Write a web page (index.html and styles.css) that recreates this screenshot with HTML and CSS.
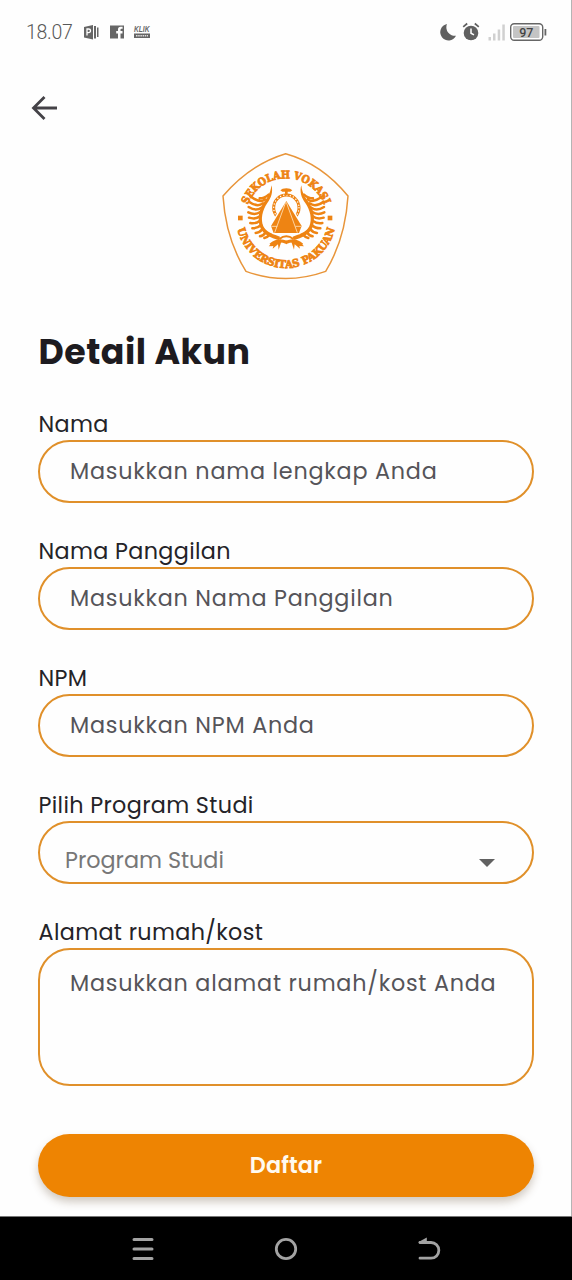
FILE: index.html
```html
<!DOCTYPE html>
<html lang="id">
<head>
<meta charset="utf-8">
<title>Detail Akun</title>
<link rel="stylesheet" href="styles.css">
</head>
<body>
<div class="screen">
  <header class="status">
    <span class="clock">18.07</span>
    <svg class="notif" width="68" height="20" viewBox="0 -2 68 20">
      <g fill="#666">
        <path d="M0 3L9 1V15.500L0 13.500Z"/><path d="M10 2H12V14.500H10ZM13 3.500H14.500V13H13Z"/>
        <path d="M26 1.500H40V14.500H36.500V9.500H38.500V7H36.500V5.500Q36.500 4.700 37.500 4.700H38.600V2.700H36.500Q34 2.700 34 5.300V7H32.200V9.500H34V14.500H26Z"/>
        <path d="M50 9.500H66V14H50Z"/>
      </g>
      <path d="M3 11.500V5H4.500Q6.500 5 6.500 6.800T4.500 8.700H3" fill="none" stroke="#fff" stroke-width="1.300"/>
      <path d="M52 11.800H64" stroke="#ddd" stroke-width="1.400" stroke-dasharray="1.500 .7"/>
      <text class="klik" x="50" y="8" textLength="15.500" lengthAdjust="spacingAndGlyphs">KLIK</text>
    </svg>
    <svg class="system" width="108" height="22" viewBox="0 0 108 22">
      <path d="M7 3A8.300 8.300 0 1 0 16 14.800A8.600 8.600 0 0 1 7 3Z" fill="#606060"/>
      <circle cx="31" cy="12" r="7.300" fill="#606060"/>
      <path d="M31 7.500V12.200L34 13.800" fill="none" stroke="#fff" stroke-width="1.500"/>
      <path d="M23.200 5.800L27.200 2.500M34.800 2.500L38.800 5.800" stroke="#606060" stroke-width="1.700"/>
      <g fill="#d0d0d0"><rect x="48.500" y="16" width="2.500" height="3.500"/><rect x="53" y="12.500" width="2.500" height="7"/><rect x="57.700" y="8.500" width="2.500" height="11"/><rect x="62.300" y="3.500" width="2.500" height="16"/></g>
      <rect x="70.700" y="2.700" width="32" height="16.600" rx="3.500" fill="#fff" stroke="#666" stroke-width="1.400"/>
      <rect x="73" y="5" width="26.500" height="12" rx="1" fill="#c4c4c4"/>
      <rect x="104.500" y="8" width="1.800" height="6.500" fill="#666"/>
      <text class="battery" x="86.300" y="15.500" text-anchor="middle">97</text>
    </svg>
  </header>

  <main class="page">
    <svg class="back" width="28" height="26" viewBox="0 0 28 26"><path d="M26 13H3M13.500 2L2.500 13L13.500 24" fill="none" stroke="#444247" stroke-width="2.800"/></svg>

    <svg class="logo" width="150" height="145" viewBox="0 0 450 435">
      <defs>
        <path id="arcTop" d="M106 222A122 122 0 0 1 350 222"/>
        <path id="arcBottom" d="M79 220A149 149 0 0 0 377 220"/>
        <g id="wing">
          <path d="M184 121C190 140 184 158 172 174C157 196 151 222 160 244C168 262 190 268 210 275L207 285C182 279 160 268 151 248C142 226 146 196 158 178C168 162 182 148 184 121Z" stroke="none"/>
          <path d="M176 149Q164 160 149 160M165 163Q150 176 121 154M159 175Q142 188 117 170M154 188Q138 200 116 186M151 201Q135 212 115 202M150 214Q136 224 117 218M150 227Q137 237 121 234M153 240Q143 250 127 250M159 251Q149 263 137 264M168 261Q160 273 150 274M180 268Q172 277 163 279" fill="none" stroke-width="7.500" stroke-linecap="round"/>
        </g>
      </defs>
      <path d="M227 26Q335 56 414 153Q406 282 347 379Q227 422 108 379Q47 282 39 153Q120 58 227 26Z" fill="none" stroke="#e8953a" stroke-width="4.500"/>
      <g fill="#ee8413" stroke="#ee8413" stroke-width="0">
        <text class="seal"><textPath href="#arcTop" startOffset="50%" text-anchor="middle" textLength="296" lengthAdjust="spacingAndGlyphs">SEKOLAH VOKASI</textPath></text>
        <text class="seal"><textPath href="#arcBottom" startOffset="50%" text-anchor="middle" textLength="404" lengthAdjust="spacingAndGlyphs">UNIVERSITAS PAKUAN</textPath></text>
        <rect x="84" y="212" width="14" height="14"/><rect x="353" y="212" width="14" height="14"/>
        <use href="#wing"/><use href="#wing" transform="translate(458 0) scale(-1 1)"/>
        <circle cx="229" cy="188" r="38" fill="none" stroke-width="9"/>
        <circle cx="229" cy="188" r="38" fill="none" stroke="#fff" stroke-width="4.500" stroke-linecap="round" stroke-dasharray="0 10"/>
        <path d="M211 136Q216 130 229 130Q242 130 247 136L241 140H233V150H225V140H217Z"/>
        <path d="M229 168L183 243L191 264H267L275 243Z" stroke="#fff" stroke-width="8" paint-order="stroke"/>
        <path d="M182 300Q203 280 229 292Q255 280 276 300" fill="none" stroke-width="10"/>
        <path d="M208 282Q229 266 250 282" fill="none" stroke-width="6"/>
        <path d="M188 292L176 304L190 303L188 311L204 298L206 314L214 290ZM270 292L282 304L268 303L270 311L254 298L252 314L244 290Z"/>
      </g>
      <path d="M227 172L194 263M229 172L262 263M184 244L202 244M256 244H274" fill="none" stroke="#ffe2bd" stroke-width="2.500"/>
    </svg>

    <h1 class="title">Detail Akun</h1>

    <form class="form">
      <div class="field"><span class="label">Nama</span><div class="box"><span class="hint">Masukkan nama lengkap Anda</span></div></div>
      <div class="field"><span class="label">Nama Panggilan</span><div class="box"><span class="hint">Masukkan Nama Panggilan</span></div></div>
      <div class="field"><span class="label">NPM</span><div class="box"><span class="hint">Masukkan NPM Anda</span></div></div>
      <div class="field"><span class="label">Pilih Program Studi</span><div class="box select"><span class="hint">Program Studi</span><svg width="16" height="8" viewBox="0 0 16 8"><path d="M0 0H16L8 8Z" fill="#616161"/></svg></div></div>
      <div class="field"><span class="label">Alamat rumah/kost</span><div class="box area"><span class="hint">Masukkan alamat rumah/kost Anda</span></div></div>
      <button class="submit" type="button">Daftar</button>
    </form>
  </main>

  <nav class="nav">
    <svg width="24" height="24" viewBox="0 0 24 24"><path d="M3 2.500H21M3 12H21M3 21.500H21" stroke="#a3a3a3" stroke-width="3" stroke-linecap="round"/></svg>
    <svg width="24" height="24" viewBox="0 0 24 24"><circle cx="12" cy="12" r="9.700" fill="none" stroke="#a3a3a3" stroke-width="2.800"/></svg>
    <svg width="24" height="24" viewBox="0 0 24 24"><path d="M3 5.500H14A7.800 7.800 0 0 1 14 21.200H3" fill="none" stroke="#a3a3a3" stroke-width="2.800" stroke-linecap="round"/><path d="M1.500 5L9.800 .5V6.500H2Z" fill="#a3a3a3"/></svg>
  </nav>
</div>
</body>
</html>
```
FILE: styles.css
```css
* { box-sizing: border-box; }
body { margin: 0; background: #fefefe; font-family: Poppins, Inter, sans-serif; }
.screen { width: 572px; height: 1280px; display: flex; flex-direction: column; overflow: hidden; }
.status { height: 64px; padding: 0 23px 0 26px; display: flex; align-items: center; border-right: 1px solid #b4b4b4; }
.clock { width: 58px; padding-top: 1px; font: 300 19.500px/24px Roboto, sans-serif; color: #585858; letter-spacing: -0.3px; }
.notif { overflow: visible; }
.klik { font: italic bold 8.500px "Liberation Sans", sans-serif; fill: #666; }
.system { margin-left: auto; }
.battery { font: 500 12.500px Roboto, sans-serif; fill: #444; }
.page { flex: 1; padding: 31px 37px 0 38px; border-right: 1px solid #b4b4b4; display: flex; flex-direction: column; }
.back { margin-left: -7px; }
.logo { margin: 24px 0 0 172px; }
.seal { font: bold 32px "DejaVu Serif", serif; stroke-width: 2.500; }
.title { margin: 36px 0 0 .5px; font-size: 34.800px; line-height: 52px; font-weight: 700; color: #1d1b20; letter-spacing: .5px; white-space: nowrap; }
.form { display: flex; flex-direction: column; gap: 32px; margin-top: 30px; }
.field { display: flex; flex-direction: column; }
.label { height: 32px; padding-left: .5px; font-size: 22.300px; line-height: 34px; color: #242328; letter-spacing: .35px; white-space: nowrap; }
.box { height: 63px; border: 2px solid #e0902a; border-radius: 32px; padding: 0 30px; display: flex; align-items: center; }
.hint { font-size: 22.300px; line-height: 32px; color: #555459; letter-spacing: .77px; white-space: nowrap; }
.select { padding: 16px 37px 0 25px; justify-content: space-between; }
.select .hint { color: #777; letter-spacing: 0; }
.select svg { margin-top: 5px; }
.area { height: 138px; padding-top: 18px; align-items: flex-start; }
.submit { margin-top: 16px; height: 63px; border: 0; border-radius: 32px; background: #ee8402; color: #fffaf0; font: 600 22.300px/32px Poppins, Inter, sans-serif; letter-spacing: .14px; box-shadow: 0 5px 8px rgba(90, 65, 35, .28); }
.nav { height: 64px; flex: none; background: #000; border-top: 1px solid #777; padding: 0 131px; display: flex; align-items: center; justify-content: space-between; }
```
